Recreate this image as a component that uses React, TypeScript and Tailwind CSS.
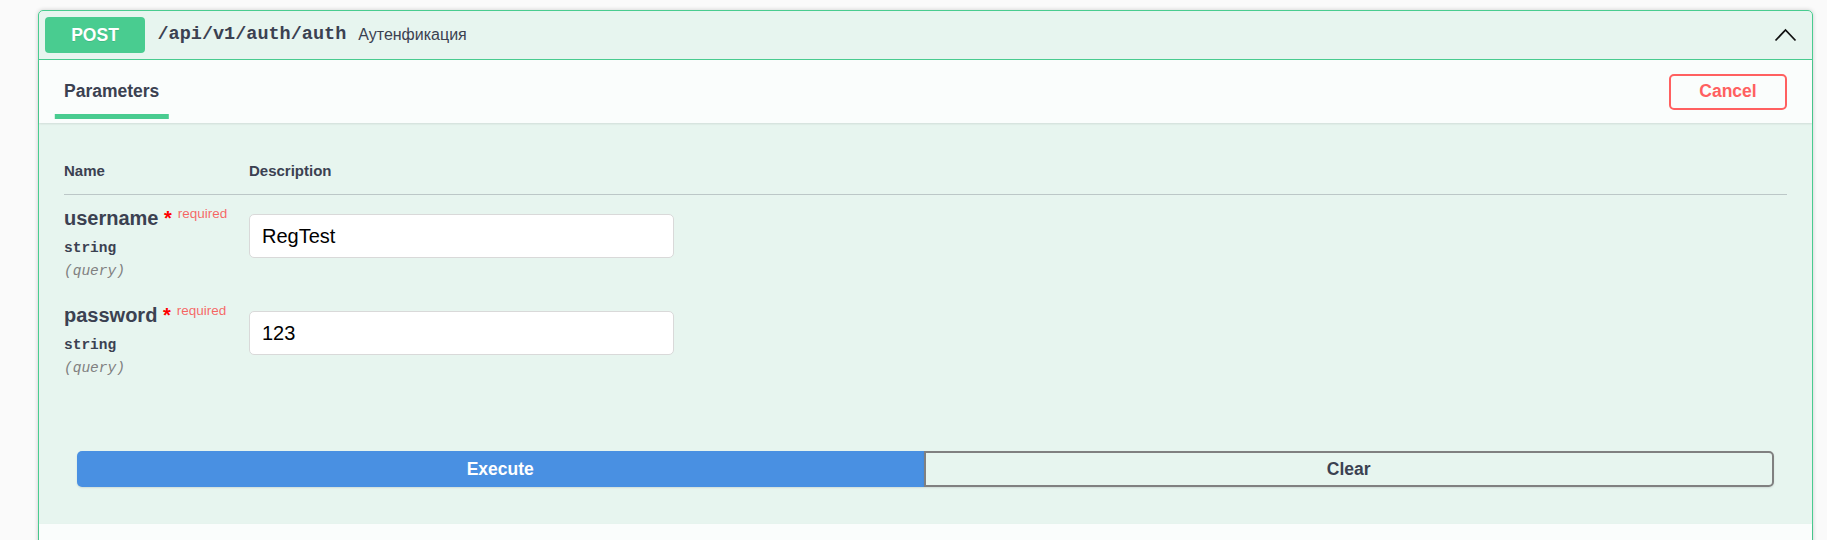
import React from 'react';

const sans = { fontFamily: '"Liberation Sans", Arial, sans-serif' };
const mono = { fontFamily: '"Liberation Mono", "DejaVu Sans Mono", monospace' };

type Param = { name: string; value: string };

const params: Param[] = [
  { name: 'username', value: 'RegTest' },
  { name: 'password', value: '123' },
];

function ParamRow({ p }: { p: Param }) {
  return (
    <div className="flex">
      <div className="w-[185px] shrink-0 pt-[13px] pb-[12px]">
        <div className="h-[20px] whitespace-nowrap text-[20px] leading-[20px] font-bold text-[#3b4151]">
          {p.name}
          <span className="text-[red]">&nbsp;*</span>
          <span className="relative top-[-7px] pl-[6px] text-[13.5px] font-normal text-[rgba(255,0,0,0.6)]">required</span>
        </div>
        <div className="mt-[11px] h-[18px] text-[14.5px] leading-[18px] font-bold text-[#3b4151]" style={mono}>string</div>
        <div className="mt-[5px] h-[18px] text-[14.5px] leading-[18px] italic text-[#808080]" style={mono}>(query)</div>
      </div>
      <div className="pt-[19px]">
        <input
          defaultValue={p.value}
          className="block h-[44px] w-[425px] rounded-[5px] border border-[#d9d9d9] bg-white px-[12px] text-[20px] text-black outline-none"
          style={sans}
        />
      </div>
    </div>
  );
}

export default function App() {
  return (
    <div className="h-[540px] overflow-hidden bg-[#fafafa] pt-[10px] pl-[38px] pr-[14px]" style={sans}>
      <div className="rounded-[5px] border border-[#49cc90] bg-[rgba(73,204,144,0.1)] shadow-[0_0_4px_rgba(0,0,0,0.19)]">
        {/* summary */}
        <div className="flex h-[49px] items-center border-b border-[#49cc90] px-[6px]">
          <div className="flex h-[36px] w-[100px] items-center justify-center rounded-[4px] bg-[#49cc90] text-[17.5px] font-bold text-white [text-shadow:0_1px_0_rgba(0,0,0,0.1)]">
            POST
          </div>
          <span className="pl-[12.5px] pr-[12px] text-[18.5px] font-bold text-[#3b4151]" style={mono}>/api/v1/auth/auth</span>
          <span className="text-[16px] text-[#3b4151]">Аутенфикация</span>
          <svg className="ml-auto mr-[9px]" width="23" height="14" viewBox="0 0 23 14" fill="none">
            <polyline points="1.5,12.5 11.5,2 21.5,12.5" stroke="#111" strokeWidth="1.8" />
          </svg>
        </div>

        {/* section header */}
        <div className="flex h-[63px] items-center justify-between bg-[rgba(255,255,255,0.8)] px-[25px] shadow-[0_1px_2px_rgba(0,0,0,0.1)]">
          <div className="relative text-[17.5px] font-bold text-[#3b4151]">
            Parameters
            <div className="absolute left-1/2 top-[36px] h-[5px] w-[120%] -translate-x-1/2 bg-[#49cc90]" />
          </div>
          <button className="h-[36px] w-[118px] rounded-[5px] border-[2.5px] border-[#ff6060] bg-transparent text-[17.5px] font-bold text-[#ff6060]">
            Cancel
          </button>
        </div>

        {/* parameters table */}
        <div className="p-[25px]">
          <div className="flex h-[47px] items-center border-b border-[rgba(59,65,81,0.25)] text-[15px] font-bold text-[#3b4151]">
            <div className="w-[185px]">Name</div>
            <div>Description</div>
          </div>
          {params.map((p) => (
            <ParamRow key={p.name} p={p} />
          ))}
        </div>

        {/* buttons */}
        <div className="flex px-[38px] pt-[37px] pb-[37px]">
          <button className="h-[36px] flex-1 rounded-l-[5px] bg-[#4990e2] text-[17.5px] font-bold text-white shadow-[0_1px_2px_rgba(0,0,0,0.1)]">
            Execute
          </button>
          <button className="h-[36px] flex-1 rounded-r-[5px] border-[2.5px] border-[#808080] bg-transparent text-[17.5px] font-bold text-[#3b4151] shadow-[0_1px_2px_rgba(0,0,0,0.1)]">
            Clear
          </button>
        </div>

        {/* responses header */}
        <div className="h-[63px] bg-[rgba(255,255,255,0.8)] shadow-[0_1px_2px_rgba(0,0,0,0.1)]" />
      </div>
    </div>
  );
}
